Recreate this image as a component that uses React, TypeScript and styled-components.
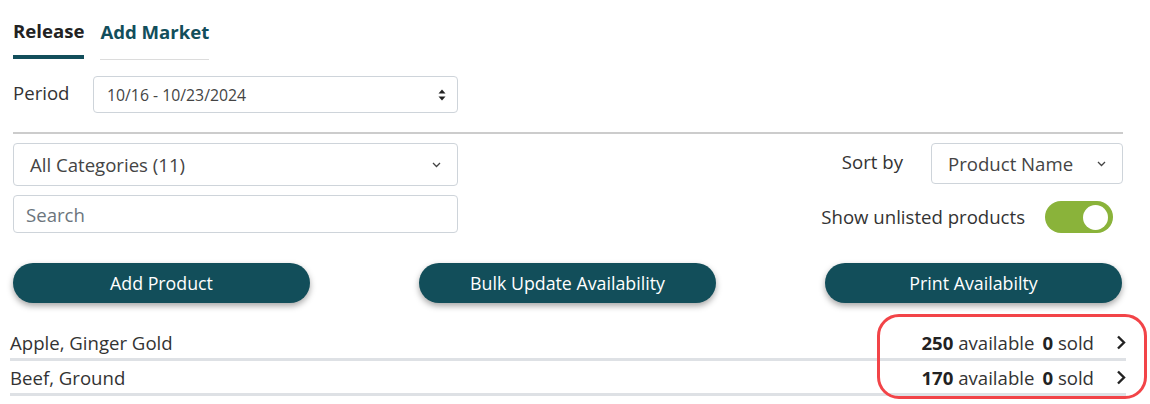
import React from "react";
import styled, { createGlobalStyle } from "styled-components";

const Global = createGlobalStyle`
  html, body { margin: 0; padding: 0; background: #fff; }
  body { font-family: "Open Sans", "Noto Sans", sans-serif; color: #333; }
  * { box-sizing: border-box; }
`;

const Page = styled.div`
  position: relative;
  width: 1150px;
  height: 404px;
  overflow: hidden;
  padding: 0 27px 0 13px;
`;

const Tabs = styled.div`
  display: flex;
  align-items: flex-end;
  gap: 16px;
  height: 60px;
`;

const Tab = styled.div<{ $active?: boolean }>`
  font-size: 18.6px;
  font-weight: 700;
  line-height: 27px;
  color: ${(p) => (p.$active ? "#222" : "#124e5b")};
  padding-bottom: ${(p) => (p.$active ? "11px" : "14px")};
  border-bottom: ${(p) => (p.$active ? "4px solid #124e5b" : "1px solid #dcdcdc")};
  margin-bottom: ${(p) => (p.$active ? "1px" : "0")};
`;

const PeriodRow = styled.div`
  display: flex;
  align-items: center;
  margin-top: 16px;
  width: 445px;
`;

const Label = styled.span<{ $w?: string }>`
  font-size: 18.6px;
  color: #333;
  width: ${(p) => p.$w || "80px"};
  flex: none;
  margin-bottom: 4px;
`;

const SelectBox = styled.div<{ $h: number; $fs: number; $pl: number; $pr: number }>`
  display: flex;
  align-items: center;
  justify-content: space-between;
  height: ${(p) => p.$h}px;
  padding: 0 ${(p) => p.$pr}px 0 ${(p) => p.$pl}px;
  border: 1px solid #ced4da;
  border-radius: 4px;
  font-size: ${(p) => p.$fs}px;
  color: #444;
  background: #fff;
  flex: 1;
`;

const Rule = styled.hr`
  margin: 19px 0 0;
  border: none;
  height: 2px;
  background: #cccccc;
`;

const Filters = styled.div`
  display: flex;
  justify-content: space-between;
  margin-top: 9px;
`;

const Column = styled.div<{ $w: number; $align?: string }>`
  display: flex;
  flex-direction: column;
  gap: 9px;
  width: ${(p) => p.$w}px;
  align-items: ${(p) => p.$align || "stretch"};
`;

const SearchBox = styled.div`
  height: 38px;
  display: flex;
  align-items: center;
  padding: 0 12px;
  border: 1px solid #ced4da;
  border-radius: 4px;
  font-size: 18.6px;
  color: #6c757d;
`;

const SortRow = styled.div`
  display: flex;
  align-items: center;
  gap: 28px;
  width: 100%;
  justify-content: flex-end;
`;

const SortSelect = styled(SelectBox)`
  flex: none;
  width: 192px;
`;

const ToggleRow = styled.div`
  display: flex;
  align-items: center;
  gap: 20px;
  margin-top: 8px;
  padding-right: 10px;
`;

const ToggleText = styled.span`
  font-size: 18.6px;
  color: #333;
  margin-bottom: 2px;
`;

const Switch = styled.div`
  width: 68px;
  height: 32px;
  border-radius: 16px;
  background: #8ab33a;
  display: flex;
  align-items: center;
  justify-content: flex-end;
  padding-right: 5px;
`;

const Knob = styled.div`
  width: 25px;
  height: 25px;
  border-radius: 50%;
  background: #fff;
`;

const Buttons = styled.div`
  display: flex;
  justify-content: space-between;
  margin-top: 30px;
  padding-right: 1px;
`;

const Button = styled.button`
  width: 297px;
  height: 40px;
  border: none;
  border-radius: 20px;
  background: #124e5a;
  color: #fff;
  font-family: inherit;
  font-size: 17.8px;
  font-weight: 500;
  box-shadow: 0 3px 6px rgba(0, 0, 0, 0.35);
  cursor: pointer;
`;

const List = styled.div`
  margin: 23px -3px 0 -3px;
`;

const Row = styled.div`
  display: flex;
  align-items: center;
  justify-content: space-between;
  height: 35px;
  padding-top: 1px;
  border-bottom: 3px solid #dee1e5;
  font-size: 18.6px;
  color: #333;
`;

const Stats = styled.div`
  display: flex;
  align-items: center;
`;

const Strong = styled.b`
  font-weight: 700;
  color: #222;
`;

const Gap = styled.span`
  display: inline-block;
  width: 8px;
`;

const Chevron = styled.span`
  display: inline-flex;
  margin-left: 22px;
  margin-right: 0;
`;

const Highlight = styled.div`
  position: absolute;
  left: 877px;
  top: 314px;
  width: 270px;
  height: 85px;
  border: 3px solid #f24448;
  border-radius: 22px;
  pointer-events: none;
`;

const ChevronDown = () => (
  <svg width="9" height="6" viewBox="0 0 9 6" fill="none">
    <path d="M1 1l3.5 3.5L8 1" stroke="#444" strokeWidth="1.3" />
  </svg>
);

const UpDown = () => (
  <svg width="8" height="12" viewBox="0 0 8 12">
    <path d="M4 0.5L7.5 4.5H0.5Z" fill="#222" />
    <path d="M4 11.5L7.5 7.5H0.5Z" fill="#222" />
  </svg>
);

const ChevronRight = () => (
  <svg width="10" height="15" viewBox="0 0 10 15" fill="none">
    <path d="M2 1.5l6 6-6 6" stroke="#222" strokeWidth="2.4" />
  </svg>
);

const products = [
  { name: "Apple, Ginger Gold", available: 250, sold: 0 },
  { name: "Beef, Ground", available: 170, sold: 0 },
];

export default function App() {
  return (
    <Page>
      <Global />
      <Tabs>
        <Tab $active>Release</Tab>
        <Tab>Add Market</Tab>
      </Tabs>
      <PeriodRow>
        <Label>Period</Label>
        <SelectBox $h={37} $fs={15.8} $pl={13} $pr={11}>
          <span>10/16 - 10/23/2024</span>
          <UpDown />
        </SelectBox>
      </PeriodRow>
      <Rule />
      <Filters>
        <Column $w={445}>
          <SelectBox $h={41} $fs={18.6} $pl={16} $pr={16}>
            <span>All Categories (11)</span>
            <ChevronDown />
          </SelectBox>
          <SearchBox>Search</SearchBox>
        </Column>
        <Column $w={400} $align="flex-end">
          <SortRow>
            <Label $w="auto">Sort by</Label>
            <SortSelect $h={41} $fs={18.6} $pl={16} $pr={16}>
              <span>Product Name</span>
              <ChevronDown />
            </SortSelect>
          </SortRow>
          <ToggleRow>
            <ToggleText>Show unlisted products</ToggleText>
            <Switch>
              <Knob />
            </Switch>
          </ToggleRow>
        </Column>
      </Filters>
      <Buttons>
        <Button>Add Product</Button>
        <Button>Bulk Update Availability</Button>
        <Button>Print Availabilty</Button>
      </Buttons>
      <List>
        {products.map((p) => (
          <Row key={p.name}>
            <span>{p.name}</span>
            <Stats>
              <Strong>{p.available}</Strong>&nbsp;available<Gap />
              <Strong>{p.sold}</Strong>&nbsp;sold
              <Chevron>
                <ChevronRight />
              </Chevron>
            </Stats>
          </Row>
        ))}
      </List>
      <Highlight />
    </Page>
  );
}
